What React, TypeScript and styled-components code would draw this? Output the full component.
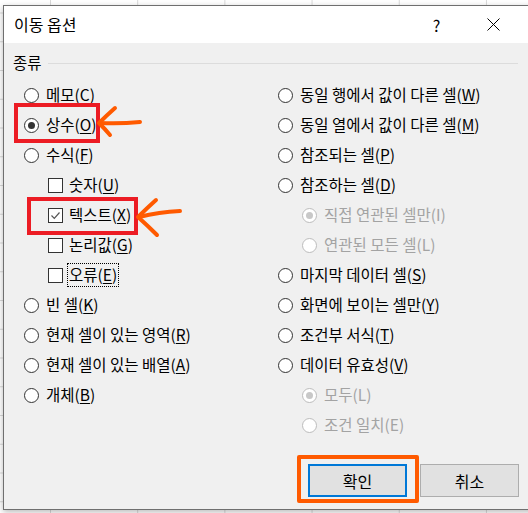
import React from "react";
import styled, { createGlobalStyle } from "styled-components";

const Global = createGlobalStyle`
  html, body { margin: 0; padding: 0; }
  body {
    width: 528px;
    height: 513px;
    overflow: hidden;
    background-color: #ffffff;
    background-image:
      linear-gradient(to right, #d9d9d9 1px, transparent 1px),
      linear-gradient(to bottom, #d9d9d9 1px, transparent 1px);
    background-size: 87.2px 28.75px;
    background-position: 50px 12.5px;
    font-family: "Noto Sans CJK KR", "Noto Sans", sans-serif;
  }
`;

const Dialog = styled.div`
  margin: 5px 0 0 3px;
  width: 540px;
  height: 505px;
  box-sizing: border-box;
  border: 1px solid #6f6f6f;
  display: flex;
  flex-direction: column;
  box-shadow: 0 2px 6px rgba(0, 0, 0, 0.28);
`;

const TitleBar = styled.div`
  height: 37px;
  flex: none;
  background: #ffffff;
  display: flex;
  align-items: center;
  padding-left: 10px;
  padding-right: 20px;
  font-size: 16px;
  color: #000;
`;

const TitleText = styled.div`
  flex: 1;
  line-height: 1;
  padding-bottom: 2px;
`;

const TitleButton = styled.div`
  width: 57px;
  height: 37px;
  display: flex;
  align-items: center;
  justify-content: center;
  font-size: 16px;
  color: #000;
`;

const Body = styled.div`
  flex: 1;
  position: relative;
  background: #f0f0f0;
  display: flex;
  flex-direction: column;
  padding: 10px 0 12px 0;
`;

const GroupHeader = styled.div`
  height: 20px;
  display: flex;
  align-items: center;
  gap: 6px;
  padding-left: 9px;
  padding-right: 24px;
  font-size: 15.5px;
  line-height: 1;
`;

const GroupLine = styled.div`
  flex: 1;
  height: 1px;
  background: #dcdcdc;
`;

const Columns = styled.div`
  margin-top: 7px;
  padding-left: 20px;
  display: grid;
  grid-template-columns: 254px 1fr;
`;

const Column = styled.div`
  display: flex;
  flex-direction: column;
`;

const Row = styled.div<{ $indent: number; $gap: number; $disabled?: boolean }>`
  height: 30px;
  display: flex;
  align-items: center;
  padding-left: ${(p) => p.$indent}px;
  gap: ${(p) => p.$gap}px;
  font-size: 15.5px;
  line-height: 1;
  color: ${(p) => (p.$disabled ? "#a3a3a3" : "#000")};
  white-space: nowrap;
`;

const Radio = styled.span<{ $checked?: boolean; $disabled?: boolean }>`
  width: 15px;
  height: 15px;
  box-sizing: border-box;
  flex: none;
  border-radius: 50%;
  border: 1px solid ${(p) => (p.$disabled ? "#bcbcbc" : "#333")};
  background: #fff;
  display: flex;
  align-items: center;
  justify-content: center;
  &::after {
    content: "";
    display: ${(p) => (p.$checked ? "block" : "none")};
    width: 7px;
    height: 7px;
    border-radius: 50%;
    background: ${(p) => (p.$disabled ? "#c8c8c8" : "#333")};
  }
`;

const Check = styled.span`
  width: 15px;
  height: 15px;
  box-sizing: border-box;
  flex: none;
  border: 1px solid #333;
  background: #fff;
  display: flex;
  align-items: center;
  justify-content: center;
`;

const Label = styled.span<{ $focus?: boolean }>`
  padding: 3px 1px;
  outline: ${(p) => (p.$focus ? "1px dotted #000" : "none")};
  outline-offset: 0;
  u {
    text-decoration: underline;
    text-underline-offset: 2px;
  }
`;

const ButtonRow = styled.div`
  margin-top: auto;
  display: flex;
  gap: 13px;
  padding-left: 304px;
`;

const Button = styled.div<{ $primary?: boolean }>`
  width: 99px;
  height: 33px;
  box-sizing: border-box;
  border: ${(p) => (p.$primary ? "2px solid #0078d7" : "1px solid #adadad")};
  background: #e1e1e1;
  display: flex;
  align-items: center;
  justify-content: center;
  font-size: 16px;
  line-height: 1;
  color: #000;
`;

const Highlight = styled.div<{ $color: string; $radius?: number }>`
  position: absolute;
  box-sizing: border-box;
  border: 4px solid ${(p) => p.$color};
  border-radius: ${(p) => p.$radius ?? 0}px;
  pointer-events: none;
`;

const Overlay = styled.svg`
  position: absolute;
  left: 0;
  top: 0;
  pointer-events: none;
`;

type Item = {
  kind: "radio" | "check";
  label: string;
  key: string;
  checked?: boolean;
  sub?: boolean;
  disabled?: boolean;
  focus?: boolean;
};

const left: Item[] = [
  { kind: "radio", label: "메모", key: "C" },
  { kind: "radio", label: "상수", key: "O", checked: true },
  { kind: "radio", label: "수식", key: "F" },
  { kind: "check", label: "숫자", key: "U", sub: true },
  { kind: "check", label: "텍스트", key: "X", sub: true, checked: true },
  { kind: "check", label: "논리값", key: "G", sub: true },
  { kind: "check", label: "오류", key: "E", sub: true, focus: true },
  { kind: "radio", label: "빈 셀", key: "K" },
  { kind: "radio", label: "현재 셀이 있는 영역", key: "R" },
  { kind: "radio", label: "현재 셀이 있는 배열", key: "A" },
  { kind: "radio", label: "개체", key: "B" },
];

const right: Item[] = [
  { kind: "radio", label: "동일 행에서 값이 다른 셀", key: "W" },
  { kind: "radio", label: "동일 열에서 값이 다른 셀", key: "M" },
  { kind: "radio", label: "참조되는 셀", key: "P" },
  { kind: "radio", label: "참조하는 셀", key: "D" },
  { kind: "radio", label: "직접 연관된 셀만", key: "I", sub: true, disabled: true, checked: true },
  { kind: "radio", label: "연관된 모든 셀", key: "L", sub: true, disabled: true },
  { kind: "radio", label: "마지막 데이터 셀", key: "S" },
  { kind: "radio", label: "화면에 보이는 셀만", key: "Y" },
  { kind: "radio", label: "조건부 서식", key: "T" },
  { kind: "radio", label: "데이터 유효성", key: "V" },
  { kind: "radio", label: "모두", key: "L", sub: true, disabled: true, checked: true },
  { kind: "radio", label: "조건 일치", key: "E", sub: true, disabled: true },
];

function CheckMark() {
  return (
    <svg width="11" height="11" viewBox="0 0 11 11">
      <polyline points="1.5,5.5 4.3,8.3 9.5,2.5" fill="none" stroke="#555" strokeWidth="1.2" />
    </svg>
  );
}

function OptionRow({ item }: { item: Item }) {
  const indent = item.sub ? 24 : 0;
  const gap = item.kind === "check" ? 5 : 6;
  return (
    <Row $indent={indent} $gap={gap} $disabled={item.disabled}>
      {item.kind === "radio" ? (
        <Radio $checked={item.checked} $disabled={item.disabled} />
      ) : (
        <Check>{item.checked && <CheckMark />}</Check>
      )}
      <Label $focus={item.focus}>
        {item.label}(
        {item.disabled ? item.key : <u>{item.key}</u>})
      </Label>
    </Row>
  );
}

export default function App() {
  return (
    <>
      <Global />
      <Dialog>
        <TitleBar>
          <TitleText>이동 옵션</TitleText>
          <TitleButton>?</TitleButton>
          <TitleButton>
            <svg width="13" height="13" viewBox="0 0 13 13">
              <path d="M0.5 0.5 L12.5 12.5 M12.5 0.5 L0.5 12.5" stroke="#000" strokeWidth="1" />
            </svg>
          </TitleButton>
        </TitleBar>
        <Body>
          <GroupHeader>
            종류
            <GroupLine />
          </GroupHeader>
          <Columns>
            <Column>
              {left.map((it, i) => (
                <OptionRow key={i} item={it} />
              ))}
            </Column>
            <Column>
              {right.map((it, i) => (
                <OptionRow key={i} item={it} />
              ))}
            </Column>
          </Columns>
          <ButtonRow>
            <Button $primary>확인</Button>
            <Button>취소</Button>
          </ButtonRow>

          <Highlight $color="#ec1c24" style={{ left: 10, top: 60, width: 86, height: 40 }} />
          <Highlight $color="#ec1c24" style={{ left: 23, top: 154, width: 111, height: 38 }} />
          <Highlight $color="#ff5a00" $radius={2} style={{ left: 293, top: 412, width: 122, height: 48 }} />
          <Overlay width="300" height="220">
            <g fill="none" stroke="#ff5a00" strokeWidth="4" strokeLinecap="round" strokeLinejoin="round">
              <path d="M111 65 Q102 73 95 80 Q101 86 106 92" />
              <path d="M96 80 Q116 81 136 79" />
              <path d="M152 157 Q142 166 134 174 Q144 183 153 192" />
              <path d="M135 174 Q155 169 176 168" />
            </g>
          </Overlay>
        </Body>
      </Dialog>
    </>
  );
}
